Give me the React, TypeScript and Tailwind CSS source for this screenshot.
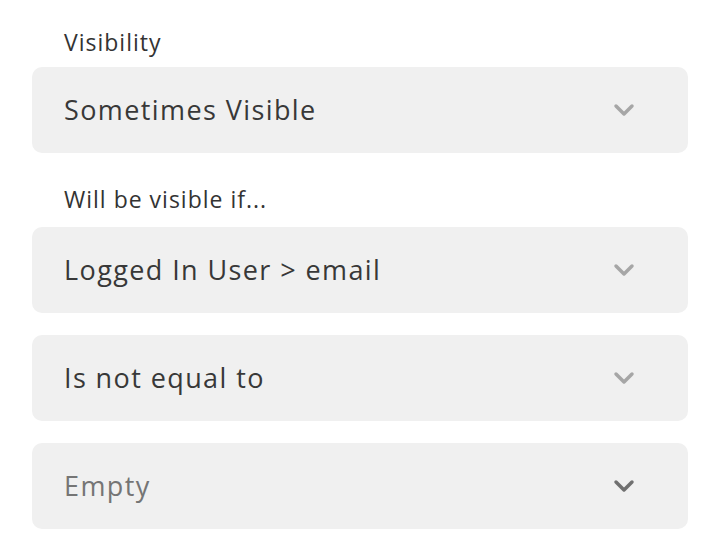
import { ChevronDown } from "lucide-react";

const font = { fontFamily: '"Open Sans", "Liberation Sans", sans-serif' };

function Select({ value, muted, dark }: { value: string; muted?: boolean; dark?: boolean }) {
  return (
    <div className="flex h-[86px] items-center justify-between rounded-[10px] bg-[#f0f0f0] pl-8 pr-[48px]">
      <span className={`text-[27px] tracking-[1.4px] ${muted ? "text-[#757575]" : "text-[#383838]"}`}>
        {value}
      </span>
      <ChevronDown
        className={`h-[32px] w-[32px] ${dark ? "text-[#707070]" : "text-[#a6a6a6]"}`}
        strokeWidth={2.6}
      />
    </div>
  );
}

export default function App() {
  return (
    <div className="min-h-[554px] w-[712px] bg-white pl-8 pr-6 pt-[28px]" style={font}>
      <div className="pl-8 text-[23px] leading-[28px] tracking-[1px] text-[#333]">Visibility</div>
      <div className="mt-[11px]">
        <Select value="Sometimes Visible" />
      </div>
      <div className="mt-[32px] pl-8 text-[23px] leading-[28px] tracking-[1px] text-[#333]">Will be visible if...</div>
      <div className="mt-[14px] flex flex-col gap-[22px]">
        <Select value="Logged In User > email" />
        <Select value="Is not equal to" />
        <Select value="Empty" muted dark />
      </div>
    </div>
  );
}
